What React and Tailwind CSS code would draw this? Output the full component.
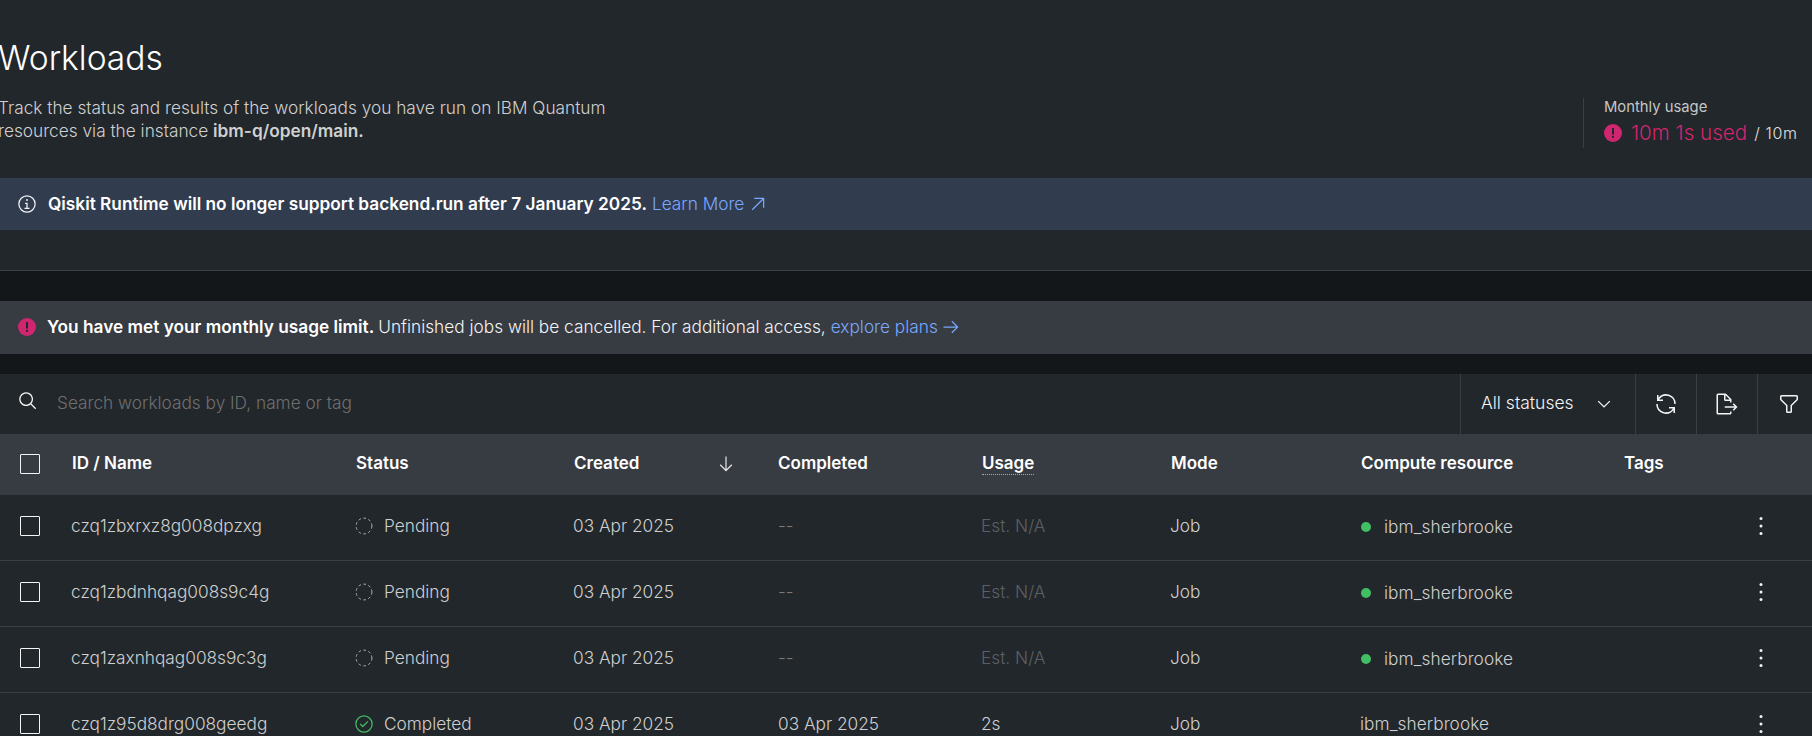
const F = "font-['Inter','Noto_Sans',sans-serif]";
const Ic = ({ d, size = 16, className = "" }) => (
  <svg viewBox="0 0 32 32" width={size} height={size} fill="currentColor" className={"shrink-0 " + className}>
    {d.map((p, i) => <path key={i} d={p} />)}
  </svg>
);
const P = {
  search: ["M29,27.5859l-7.5521-7.5521a11.0177,11.0177,0,1,0-1.4141,1.4141L27.5859,29ZM4,13a9,9,0,1,1,9,9A9.01,9.01,0,0,1,4,13Z"],
  filter: ["M18,28H14a2,2,0,0,1-2-2V18.41L4.59,11A2,2,0,0,1,4,9.59V6A2,2,0,0,1,6,4H26a2,2,0,0,1,2,2V9.59A2,2,0,0,1,27.41,11L20,18.41V26A2,2,0,0,1,18,28ZM6,6V9.59l8,8V26h4V17.59l8-8V6Z"],
  renew: ["M12 10H6.78A11 11 0 0 1 27 16h2A13 13 0 0 0 6 7.68V4H4v8h8zM20 22h5.22A11 11 0 0 1 5 16H3a13 13 0 0 0 23 8.32V28h2V20H20z"],
  exportDoc: ["M13 21L26.17 21 23.59 23.59 25 25 30 20 25 15 23.59 16.41 26.17 19 13 19 13 21z", "M22 14V10a1 1 0 0 0-.29-.71l-7-7A1 1 0 0 0 14 2H4A2 2 0 0 0 2 4V28a2 2 0 0 0 2 2H20a2 2 0 0 0 2-2V26H20v2H4V4h8v6a2 2 0 0 0 2 2h6v2zm-8-4V4.41L19.59 10z"],
  info: ["M17 22v-8h-4v2h2v6h-3v2h8v-2h-3z", "M16 8a1.5 1.5 0 1 0 1.5 1.5A1.5 1.5 0 0 0 16 8z", "M16 30a14 14 0 1 1 14-14 14 14 0 0 1-14 14zm0-26a12 12 0 1 0 12 12A12 12 0 0 0 16 4z"],
  right: ["M18 6L16.57 7.393 24.15 15 4 15 4 17 24.15 17 16.57 24.573 18 26 28 16 18 6z"],
  down: ["M24.59 16.59L17 24.17 17 4 15 4 15 24.17 7.41 16.59 6 18 16 28 26 18 24.59 16.59z"],
  upRight: ["M10 6L10 8 22.59 8 6 24.59 7.41 26 24 9.41 24 22 26 22 26 6 10 6z"],
  chevron: ["M16 22L6 12l1.4-1.4 8.6 8.6 8.6-8.6L26 12z"],
  check: ["M14 21.414L9 16.413 10.413 15 14 18.586 21.585 11 23 12.415 14 21.414z", "M16 2a14 14 0 1 0 14 14A14 14 0 0 0 16 2zm0 26a12 12 0 1 1 12-12 12 12 0 0 1-12 12z"],
};
const Warn = () => (
  <svg viewBox="0 0 18 18" width="18" height="18" className="shrink-0">
    <circle cx="9" cy="9" r="9" fill="#d02670" />
    <rect x="8" y="4" width="2" height="6.5" fill="#22272b" />
    <rect x="8" y="11.8" width="2" height="2" fill="#22272b" />
  </svg>
);
const Pending = () => (
  <svg viewBox="0 0 18 18" width="18" height="18" className="shrink-0">
    <circle cx="9" cy="9" r="7.9" fill="none" stroke="#b4b4b4" strokeWidth="1" strokeDasharray="2.6 2.6" />
  </svg>
);
const Kebab = () => (
  <svg viewBox="0 0 4 20" width="4" height="20" fill="#f4f4f4"><circle cx="2" cy="2.5" r="1.5"/><circle cx="2" cy="10" r="1.5"/><circle cx="2" cy="17.5" r="1.5"/></svg>
);
const Box = () => <span className="block w-[20px] h-[20px] border border-[#f4f4f4] rounded-[1px]" />;
const cols = "grid grid-cols-[71px_285px_218px_204px_204px_189px_190px_263px_1fr] items-center";
const rows = [
  ["czq1zbxrxz8g008dpzxg", "Pending", "--", "Est. N/A", true],
  ["czq1zbdnhqag008s9c4g", "Pending", "--", "Est. N/A", true],
  ["czq1zaxnhqag008s9c3g", "Pending", "--", "Est. N/A", true],
  ["czq1z95d8drg008geedg", "Completed", "03 Apr 2025", "2s", false],
];
export default function App() {
  return (
    <div className={"h-[736px] overflow-hidden bg-[#13171a] text-[#f4f4f4] " + F}>
      <div className="h-[271px] bg-[#22272b] border-b border-[#3a4045]">
        <div className="h-[178px] flex items-start justify-between">
          <div className="-ml-[2px]">
            <h1 className="mt-[38px] text-[33.6px] leading-[40px] font-light text-white">Workloads</h1>
            <p className="mt-[18px] w-[660px] text-[17.25px] leading-[23px] text-[#d0d0d0] font-light">
              Track the status and results of the workloads you have run on IBM Quantum<br />
              resources via the instance <b className="font-semibold">ibm-q/open/main.</b>
            </p>
          </div>
          <div className="mt-[98px] h-[50px] w-[229px] border-l border-[#393f44] pl-[20px]">
            <div className="text-[14.8px] leading-[18px] text-[#c6c6c6]">Monthly usage</div>
            <div className="mt-[4px] flex items-center text-[#d02670]">
              <Warn />
              <span className="ml-[9px] text-[20.6px] leading-[26px] font-light">10m 1s used</span>
              <span className="ml-[7px] text-[16px] tracking-[0.04em] text-[#e0e0e0] font-light">/ 10m</span>
            </div>
          </div>
        </div>
        <div className="h-[52px] bg-[#323c4f] flex items-center pl-[18px] text-[17.25px] pb-[1px]">
          <Ic d={P.info} size={20} className="-ml-[1px] mr-[1px]" />
          <b className="ml-[10px] font-semibold text-white">Qiskit Runtime will no longer support backend.run after 7 January 2025.</b>
          <a className="ml-[5px] text-[#78a9ff] font-light flex items-center">Learn More<Ic d={P.upRight} size={20} className="ml-[4px]" /></a>
        </div>
      </div>
      <div className="mt-[30px] h-[53px] bg-[#373b42] flex items-center pl-[18px] text-[17.25px] pb-[2px]">
        <Warn />
        <b className="ml-[11px] font-semibold text-white">You have met your monthly usage limit.</b>
        <span className="ml-[4px] text-[#f4f4f4] font-light">Unfinished jobs will be cancelled. For additional access,</span>
        <a className="ml-[5px] text-[#78a9ff] font-light flex items-center">explore plans<Ic d={P.right} size={20} className="ml-[3px]" /></a>
      </div>
      <div className="mt-[20px] h-[60px] bg-[#22272b] flex items-stretch">
        <div className="flex-1 flex items-center pl-[18px] pb-[3px]">
          <Ic d={P.search} size={20} className="-mt-[3px]" />
          <input className="ml-[19px] flex-1 bg-transparent outline-none text-[17.25px] font-light placeholder:text-[#6f6f6f]" placeholder="Search workloads by ID, name or tag" />
        </div>
        <div className="w-[175px] border-l border-[#393f44] flex items-center pl-[20px] text-[17.5px] font-light pb-[2px]">
          All statuses<Ic d={P.chevron} size={20} className="ml-[20px] mt-[2px]" />
        </div>
        <div className="w-[61px] border-l border-[#393f44] flex items-center justify-center"><Ic d={P.renew} size={24} /></div>
        <div className="w-[61px] border-l border-[#393f44] flex items-center justify-center"><Ic d={P.exportDoc} size={24} /></div>
        <div className="w-[55px] border-l border-[#393f44] flex items-center pl-[19px]"><Ic d={P.filter} size={24} /></div>
      </div>
      <div className={cols + " h-[61px] bg-[#373b42] text-[17px] font-semibold text-white pb-[2px]"}>
        <div className="pl-[20px]"><Box /></div>
        <div className="pl-[1px]">ID / Name</div>
        <div>Status</div>
        <div className="flex items-center justify-between pr-[42px]">Created<Ic d={P.down} size={20} className="text-[#e0e0e0]" /></div>
        <div>Completed</div>
        <div><span className="border-b border-dotted border-[#a8a8a8] pb-[1px]">Usage</span></div>
        <div>Mode</div>
        <div>Compute resource</div>
        <div>Tags</div>
      </div>
      {rows.map((r) => (
        <div key={r[0]} className={cols + " h-[66px] bg-[#22272b] border-b border-[#393f44] text-[17.25px] text-[#cfcfcf] font-light pb-[3px]"}>
          <div className="pl-[20px]"><Box /></div>
          <div>{r[0]}</div>
          <div className="flex items-center gap-[11px] -ml-[1px]">
            {r[4] ? <Pending /> : <Ic d={P.check} size={20} className="text-[#42be65] -ml-[1px]" />}
            <span className={r[4] ? "" : "-ml-[1px]"}>{r[1]}</span>
          </div>
          <div className="-ml-[1px]">03 Apr 2025</div>
          <div className={r[4] ? "text-[#7a7a7a]" : ""}>{r[2]}</div>
          <div className={r[4] ? "text-[#5c6064] -ml-[1px]" : "-ml-[1px]"}>{r[3]}</div>
          <div className="-ml-[1px]">Job</div>
          <div className={"flex items-center tracking-[0.004em]" + (r[4] ? " pt-[1px]" : " -ml-[1px]")}>
            {r[4] && <span className="w-[10px] h-[10px] rounded-full bg-[#42be65] mr-[13px] shrink-0" />}
            ibm_sherbrooke
          </div>
          <div className="flex justify-end pr-[49px]"><Kebab /></div>
        </div>
      ))}
    </div>
  );
}
